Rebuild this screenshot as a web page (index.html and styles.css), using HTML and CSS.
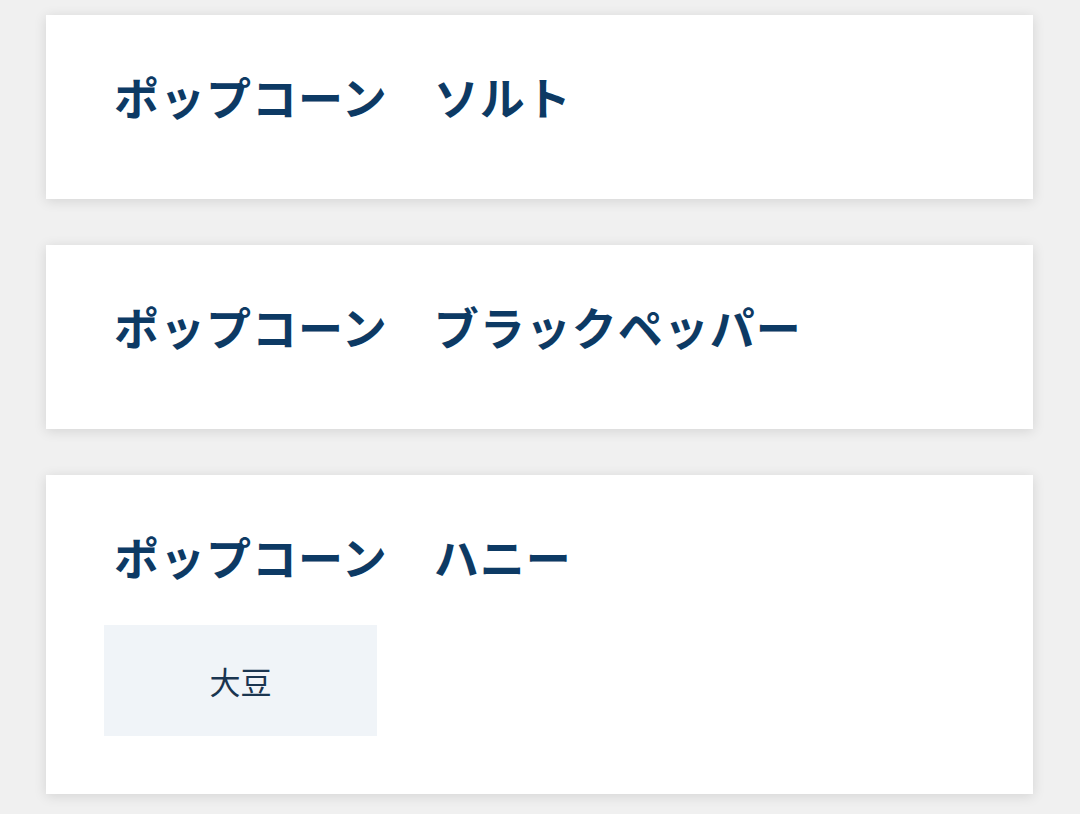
FILE: index.html
```html
<!DOCTYPE html>
<html lang="ja">
<head>
    <meta charset="UTF-8">
    <meta name="viewport" content="width=device-width, initial-scale=1.0">
    <title>ポップコーン</title>
    <link rel="stylesheet" href="styles.css">
</head>
<body>
    <main class="list">
        <section class="card">
            <h2 class="card-title">ポップコーン　ソルト</h2>
        </section>
        <section class="card">
            <h2 class="card-title">ポップコーン　ブラックペッパー</h2>
        </section>
        <section class="card">
            <h2 class="card-title">ポップコーン　ハニー</h2>
            <div class="tags">
                <span class="tag">大豆</span>
            </div>
        </section>
    </main>
</body>
</html>
```

FILE: styles.css
```css
body {
    margin: 0;
    background-color: #f0f0f0;
    font-family: "Noto Sans CJK JP", "Noto Sans", sans-serif;
    color: #0d3a64;
}
.list {
    display: flex;
    flex-direction: column;
    gap: 46px;
    padding: 15px 47px 20px 46px;
}
.card {
    background: #ffffff;
    padding: 54px 58px 58px;
    box-shadow: 0 2px 12px rgba(0, 0, 0, 0.12);
}
.card-title {
    margin: 0 0 16px;
    padding-left: 10px;
    font-size: 45px;
    line-height: 56px;
    font-weight: 700;
    letter-spacing: 1px;
}
.tags {
    display: flex;
    margin-top: 40px;
}
.tag {
    display: flex;
    align-items: center;
    justify-content: center;
    width: 273px;
    height: 111px;
    background: #f0f4f8;
    font-size: 31px;
    font-weight: 400;
    color: #1a3550;
}
```
